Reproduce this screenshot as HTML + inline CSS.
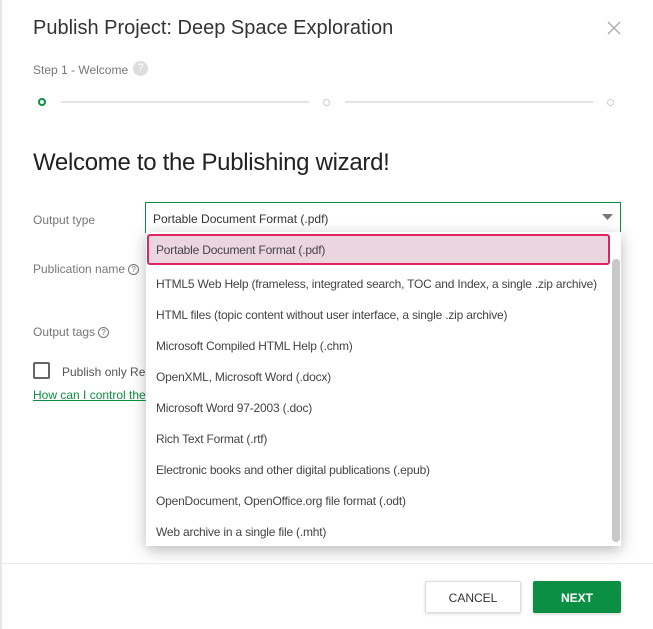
<!DOCTYPE html>
<html><head><meta charset="utf-8"><style>
*{margin:0;padding:0;box-sizing:border-box}
body{width:653px;height:629px;background:#fff;font-family:"Liberation Sans",sans-serif;position:relative;overflow:hidden;color:#333}
.a{position:absolute;white-space:nowrap}
.lbl{font-size:12px;color:#777}
.q{display:inline-block;width:11px;height:11px;border:1px solid #777;border-radius:50%;font-size:8px;text-align:center;line-height:9px;color:#777;vertical-align:1px;margin-left:3px}
.it{position:absolute;left:156px;font-size:12px;color:#444;letter-spacing:-0.2px}
</style></head><body>
<div class="a" style="left:0;top:0;width:2px;height:629px;background:#e6e6e6"></div>
<div class="a" style="left:33px;top:17px;font-size:20px;color:#333">Publish Project: Deep Space Exploration</div>
<svg class="a" style="left:607px;top:21px" width="14" height="14"><path d="M1 1L13 13M13 1L1 13" stroke="#aaa" stroke-width="1.3"/></svg>
<div class="a" style="left:33px;top:63px;font-size:12px;color:#777">Step 1 - Welcome</div>
<div class="a" style="left:133px;top:61px;width:15px;height:15px;border-radius:50%;background:#ddd;color:#fff;font-size:11px;text-align:center;line-height:15px">?</div>
<div class="a" style="left:38px;top:98px;width:8px;height:8px;border:2px solid #0a8f3f;border-radius:50%"></div>
<div class="a" style="left:61px;top:101px;width:248px;height:2px;background:#e3e3e3"></div>
<div class="a" style="left:323px;top:99px;width:7px;height:7px;border:1px solid #ccc;border-radius:50%"></div>
<div class="a" style="left:345px;top:101px;width:248px;height:2px;background:#e3e3e3"></div>
<div class="a" style="left:607px;top:99px;width:7px;height:7px;border:1px solid #ccc;border-radius:50%"></div>
<div class="a" style="left:33px;top:149px;font-size:24px;letter-spacing:-0.3px;color:#222">Welcome to the Publishing wizard!</div>
<div class="a lbl" style="left:33px;top:213px">Output type</div>
<div class="a lbl" style="left:33px;top:262px">Publication name<span class="q">?</span></div>
<div class="a lbl" style="left:33px;top:325px">Output tags<span class="q">?</span></div>
<div class="a" style="left:33px;top:362px;width:17px;height:17px;border:2px solid #666;border-radius:2px"></div>
<div class="a" style="left:62px;top:365px;font-size:12px;color:#555">Publish only Rea</div>
<div class="a" style="left:33px;top:388px;font-size:12px;color:#0a8f3f;text-decoration:underline">How can I control the</div>
<div class="a" style="left:145px;top:202px;width:476px;height:31px;border:1px solid #0a8f3f;border-bottom:none;background:#fff"></div>
<div class="a" style="left:153px;top:212px;font-size:12px;color:#333">Portable Document Format (.pdf)</div>
<svg class="a" style="left:602px;top:214px" width="11" height="7"><path d="M0 0H11L5.5 6Z" fill="#777"/></svg>
<div class="a" style="left:146px;top:232px;width:475px;height:314px;background:#fff;box-shadow:0 4px 14px rgba(0,0,0,.28)"></div>
<div class="a" style="left:147px;top:234px;width:463px;height:31px;background:#ebd6df;border:2px solid #e0245e;border-radius:3px"></div>
<div class="a" style="left:612px;top:259px;width:8px;height:283px;background:#c8c8c8;border-radius:4px"></div>
<div class="it" style="top:243px">Portable Document Format (.pdf)</div>
<div class="it" style="top:277px">HTML5 Web Help (frameless, integrated search, TOC and Index, a single .zip archive)</div>
<div class="it" style="top:308px">HTML files (topic content without user interface, a single .zip archive)</div>
<div class="it" style="top:339px">Microsoft Compiled HTML Help (.chm)</div>
<div class="it" style="top:370px">OpenXML, Microsoft Word (.docx)</div>
<div class="it" style="top:401px">Microsoft Word 97-2003 (.doc)</div>
<div class="it" style="top:432px">Rich Text Format (.rtf)</div>
<div class="it" style="top:463px">Electronic books and other digital publications (.epub)</div>
<div class="it" style="top:494px">OpenDocument, OpenOffice.org file format (.odt)</div>
<div class="it" style="top:525px">Web archive in a single file (.mht)</div>
<div class="a" style="left:2px;top:563px;width:651px;height:1px;background:#e8e8e8"></div>
<div class="a" style="left:425px;top:581px;width:96px;height:32px;border:1px solid #ddd;border-radius:2px;box-shadow:0 1px 3px rgba(0,0,0,.15);font-size:12px;color:#333;text-align:center;line-height:32px">CANCEL</div>
<div class="a" style="left:533px;top:581px;width:88px;height:32px;background:#0a8f44;border-radius:2px;box-shadow:0 1px 3px rgba(0,0,0,.2);font-size:12px;font-weight:bold;color:#fff;text-align:center;line-height:34px">NEXT</div>
</body></html>
